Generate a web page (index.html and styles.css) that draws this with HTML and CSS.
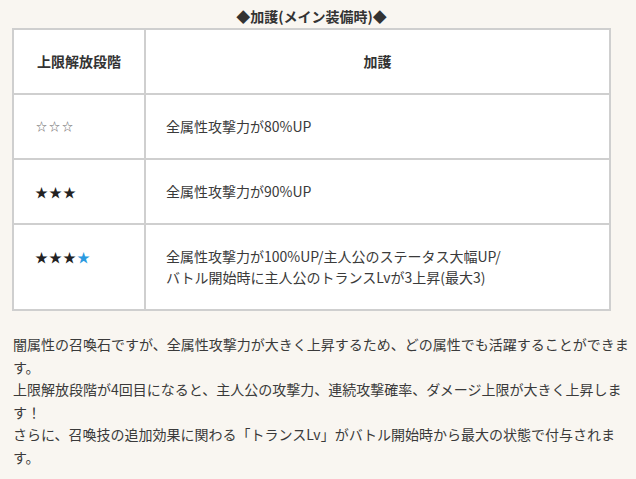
FILE: index.html
```html
<!DOCTYPE html>
<html lang="ja">
<head>
<meta charset="utf-8">
<link rel="stylesheet" href="styles.css">
</head>
<body>
<div class="page">
  <h3 class="title">◆加護(メイン装備時)◆</h3>
  <table class="tbl">
    <thead>
      <tr><th class="c1">上限解放段階</th><th class="c2">加護</th></tr>
    </thead>
    <tbody>
      <tr><td class="c1 stars light">☆☆☆</td><td class="c2">全属性攻撃力が80%UP</td></tr>
      <tr><td class="c1 stars">★★★</td><td class="c2">全属性攻撃力が90%UP</td></tr>
      <tr><td class="c1 stars">★★★<span class="blue">★</span></td><td class="c2">全属性攻撃力が100%UP/主人公のステータス大幅UP/<br>バトル開始時に主人公のトランスLvが3上昇(最大3)</td></tr>
    </tbody>
  </table>
  <p class="desc">闇属性の召喚石ですが、全属性攻撃力が大きく上昇するため、どの属性でも活躍することができます。<br>上限解放段階が4回目になると、主人公の攻撃力、連続攻撃確率、ダメージ上限が大きく上昇します！<br>さらに、召喚技の追加効果に関わる「トランスLv」がバトル開始時から最大の状態で付与されます。</p>
</div>
</body>
</html>
```

FILE: styles.css
```css
html, body {
  margin: 0;
  padding: 0;
  background: #f9f6f1;
}
body {
  font-family: "Noto Sans CJK JP", "Noto Sans", sans-serif;
  color: #3a3a3a;
  font-size: 14px;
}
.page {
  padding: 6px 0 0 12px;
  width: 618px;
}
.title {
  margin: 0 0 1px 0;
  width: 599px;
  text-align: center;
  font-size: 14px;
  line-height: 21px;
  font-weight: bold;
  color: #333;
}
.tbl {
  width: 599px;
  border-collapse: collapse;
  background: #fff;
}
.tbl th, .tbl td {
  border: 2px solid #cfcfcf;
  padding: 21px 20px;
  line-height: 21px;
  font-size: 14px;
  vertical-align: top;
  text-align: left;
}
.tbl th {
  text-align: center;
  font-weight: bold;
  color: #333;
}
.tbl .c1 {
  width: 90px;
}
.tbl .stars {
  font-size: 13px;
  letter-spacing: 1px;
  text-indent: 1px;
  color: #222;
}
.tbl .stars.light {
  color: #666;
  font-size: 11px;
  letter-spacing: 2px;
  text-indent: 2px;
}
.blue {
  color: #2b9ae0;
}
.desc {
  margin: 22px 0 0 1px;
  font-size: 14px;
  line-height: 22.5px;
}
```
